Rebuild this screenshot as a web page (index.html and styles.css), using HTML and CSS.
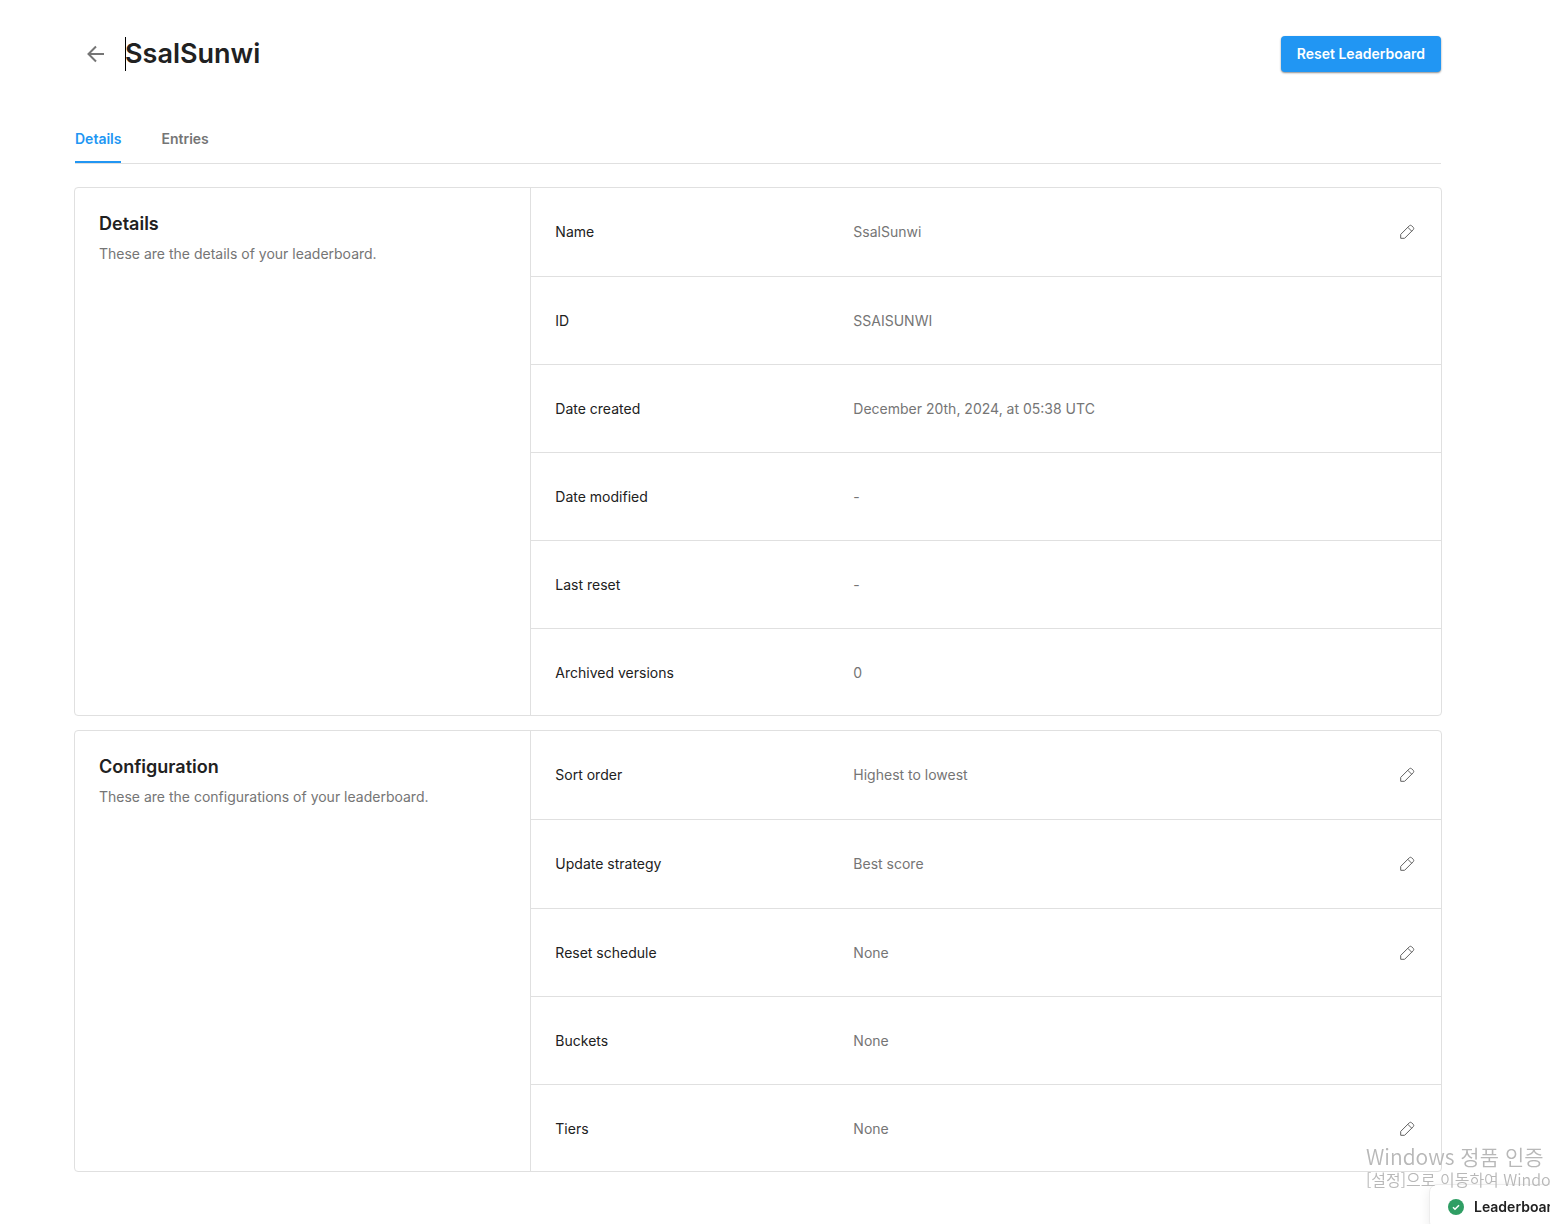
FILE: index.html
```html
<!DOCTYPE html>
<html lang="en">
<head>
<meta charset="utf-8">
<meta name="viewport" content="width=device-width, initial-scale=1">
<title>SsalSunwi - Leaderboard</title>
<link rel="stylesheet" href="styles.css">
</head>
<body>
<svg class="sprite" aria-hidden="true">
  <symbol id="pencil" viewBox="0 0 16 16">
    <path d="M1.7 14.3V10.4L10.4 1.7Q11.5.8 12.6 1.7L14.3 3.4Q15.2 4.5 14.3 5.6L5.6 14.3ZM8.8 3.3L12.7 7.2"/>
  </symbol>
</svg>
<main class="page">
  <header class="header">
    <button class="back" type="button" aria-label="Back">
      <svg viewBox="0 0 24 24" width="24" height="24"><path d="M20 12H5M12 4.5L4.5 12L12 19.5"/></svg>
    </button>
    <h1 class="title">SsalSunwi</h1>
    <button class="reset" type="button">Reset Leaderboard</button>
  </header>

  <nav class="tabs">
    <a class="tab tab-active" href="#details">Details</a>
    <a class="tab" href="#entries">Entries</a>
  </nav>

  <section class="card" id="details">
    <div class="intro">
      <h2>Details</h2>
      <p>These are the details of your leaderboard.</p>
    </div>
    <dl class="rows">
      <div class="row"><dt>Name</dt><dd>SsalSunwi</dd><button class="edit" type="button" aria-label="Edit name"><svg><use href="#pencil"/></svg></button></div>
      <div class="row"><dt>ID</dt><dd>SSAISUNWI</dd></div>
      <div class="row"><dt>Date created</dt><dd>December 20th, 2024, at 05:38 UTC</dd></div>
      <div class="row"><dt>Date modified</dt><dd>-</dd></div>
      <div class="row"><dt>Last reset</dt><dd>-</dd></div>
      <div class="row"><dt>Archived versions</dt><dd>0</dd></div>
    </dl>
  </section>

  <section class="card">
    <div class="intro">
      <h2>Configuration</h2>
      <p>These are the configurations of your leaderboard.</p>
    </div>
    <dl class="rows">
      <div class="row"><dt>Sort order</dt><dd>Highest to lowest</dd><button class="edit" type="button" aria-label="Edit sort order"><svg><use href="#pencil"/></svg></button></div>
      <div class="row row-tall"><dt>Update strategy</dt><dd>Best score</dd><button class="edit" type="button" aria-label="Edit update strategy"><svg><use href="#pencil"/></svg></button></div>
      <div class="row"><dt>Reset schedule</dt><dd>None</dd><button class="edit" type="button" aria-label="Edit reset schedule"><svg><use href="#pencil"/></svg></button></div>
      <div class="row"><dt>Buckets</dt><dd>None</dd></div>
      <div class="row"><dt>Tiers</dt><dd>None</dd><button class="edit" type="button" aria-label="Edit tiers"><svg><use href="#pencil"/></svg></button></div>
    </dl>
  </section>
</main>

<div class="overlay">
  <div class="toast" role="status">
    <svg viewBox="0 0 16 16" width="16" height="16"><circle cx="8" cy="8" r="8"/><path d="M5 8.2L7 10.2L11 6.2"/></svg>
    <span>Leaderboar</span>
  </div>
  <div class="watermark" lang="ko">
    <p class="watermark-title">Windows 정품 인증</p>
    <p class="watermark-text">[설정]으로 이동하여 Windo</p>
  </div>
</div>
</body>
</html>
```
FILE: styles.css
```css
* { box-sizing: border-box; }

body {
  margin: 0;
  background: #fff;
  color: #212121;
  font: 14px/20px Inter, "Liberation Sans", sans-serif;
}

h1, h2, p, dl, dd { margin: 0; }
button { padding: 0; border: 0; background: none; font: inherit; cursor: pointer; }
.sprite { position: absolute; width: 0; height: 0; }

.page { padding: 30px 108px 52px 74px; }

.header { display: flex; align-items: center; height: 48px; padding: 0 1px 0 10px; }
.back { display: flex; margin-right: 17px; }
.back svg { width: 24px; height: 24px; fill: none; stroke: #757575; stroke-width: 2; }
.title { position: relative; flex: 1; font-size: 27px; line-height: 34px; font-weight: 600; }
.title::before {
  content: "";
  position: absolute;
  inset: 0 auto 0 0;
  width: 1px;
  background: #000;
}
.reset {
  height: 36px;
  padding: 0 16px;
  border-radius: 4px;
  background: #2196f3;
  color: #fff;
  font-weight: 600;
  box-shadow: 0 1px 2px rgba(0, 0, 0, .45);
}

.tabs {
  display: flex;
  gap: 40px;
  height: 50px;
  margin: 36px 1px 23px;
  border-bottom: 1px solid #e0e0e0;
}
.tab { padding-top: 15px; color: #757575; font-weight: 600; text-decoration: none; }
.tab-active { color: #2196f3; border-bottom: 2px solid #2196f3; }

.card {
  display: grid;
  grid-template-columns: 1fr 2fr;
  margin-bottom: 14px;
  border: 1px solid #e0e0e0;
  border-radius: 4px;
}
.card:last-child { margin-bottom: 0; }
.intro { padding: 24px; }
.intro h2 { margin-bottom: 8px; font-size: 18px; line-height: 24px; font-weight: 600; }
.intro p { color: #757575; }

.rows { border-left: 1px solid #e0e0e0; }
.row {
  display: grid;
  grid-template-columns: 298px 1fr 20px;
  align-items: center;
  min-height: 88px;
  padding: 0 24px;
  border-bottom: 1px solid #e0e0e0;
}
.row:first-child, .row-tall { min-height: 89px; }
.row:last-child { min-height: 86px; padding-top: 2px; border-bottom: 0; }
.row dd { color: #757575; }
.edit { display: flex; justify-content: center; }
.edit svg { width: 16px; height: 16px; fill: none; stroke: #616161; stroke-width: 1; }

.overlay {
  position: fixed;
  right: 0;
  bottom: 0;
  width: 184px;
  height: 84px;
  overflow: hidden;
  pointer-events: none;
}
.toast {
  position: absolute;
  top: 44px;
  left: 63px;
  display: flex;
  align-items: center;
  gap: 10px;
  width: 140px;
  height: 46px;
  padding-left: 18px;
  border: 1px solid #ededed;
  border-radius: 8px;
  background: #fff;
  box-shadow: 0 4px 12px rgba(0, 0, 0, .08);
  font-weight: 600;
}
.toast circle { fill: #2f9e64; }
.toast path { fill: none; stroke: #fff; stroke-width: 1.5; }
.watermark {
  position: absolute;
  top: 3px;
  left: 0;
  color: #b8b8b8;
  font-family: "Noto Sans CJK KR", sans-serif;
  font-weight: 350;
  white-space: nowrap;
}
.watermark-title { font-size: 21px; line-height: 26px; }
.watermark-text { font-size: 16px; line-height: 20px; }
```
